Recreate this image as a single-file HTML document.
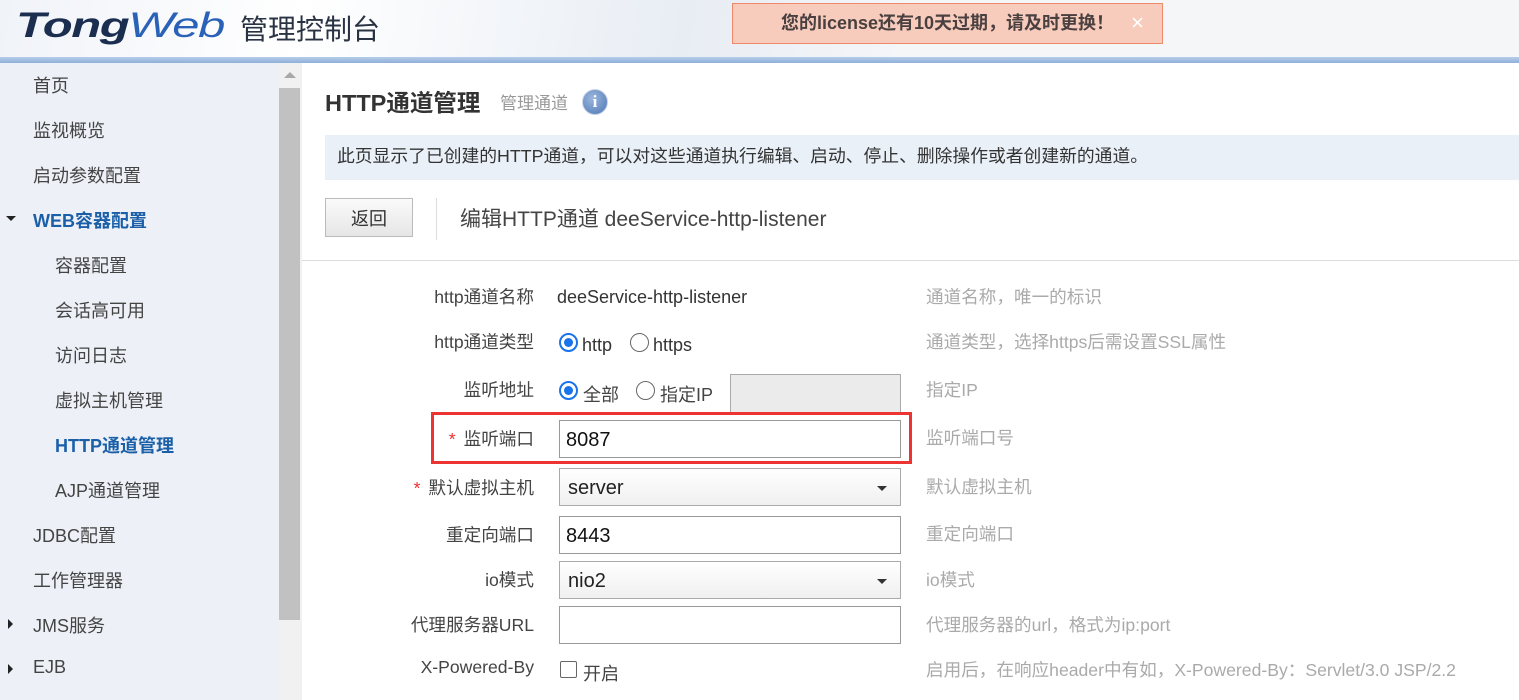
<!DOCTYPE html>
<html><head><meta charset="utf-8">
<style>
*{margin:0;padding:0;box-sizing:border-box}
body{width:1519px;height:700px;overflow:hidden;background:#fff;font-family:"Liberation Sans","Noto Sans CJK SC",sans-serif;position:relative;color:#333}
.hdr{position:absolute;left:0;top:0;width:1519px;height:58px;background:linear-gradient(100deg,#f0f3f8 0%,#fff 20%,#e8edf4 45%,#f5f6f8 60%,#f5f6f8 100%)}
.bar{position:absolute;left:0;top:57px;width:1519px;height:6px;background:linear-gradient(#b6cdea,#8eb0d8)}
.logo{position:absolute;left:16px;top:6px;font-size:35px;font-weight:bold;font-style:italic;color:#1b2e50;letter-spacing:-1px;font-family:"Liberation Sans",sans-serif;transform:scaleX(1.4);transform-origin:left;white-space:nowrap}
.logo span{color:#2a62b8;font-weight:normal}
.logo2{position:absolute;left:240px;top:8px;font-size:28px;color:#2a3344;font-family:"Noto Sans CJK SC",sans-serif;white-space:nowrap}
.lic{position:absolute;left:732px;top:3px;width:431px;height:41px;background:#f8ccbd;border:1px solid #ee8a6c;font-size:18px;font-weight:bold;color:#4a4040;text-align:center;line-height:38px}
.lic i{position:absolute;right:18px;top:0;font-style:normal;color:#fff;font-weight:normal;font-size:22px}
.side{position:absolute;left:0;top:63px;width:279px;height:637px;background:#edf1f7}
.sb{position:absolute;left:279px;top:63px;width:23px;height:637px;background:#f1f1f1}
.thumb{position:absolute;left:279px;top:88px;width:21px;height:532px;background:#c1c1c1}
.arr{position:absolute;left:284px;top:72px;width:0;height:0;border-left:6px solid transparent;border-right:6px solid transparent;border-bottom:6px solid #a8a8a8}
.it{position:absolute;font-size:18px;color:#444;margin-top:-2px}
.tri{position:absolute;left:6px;width:0;height:0}
.title{position:absolute;left:325px;top:84px;font-size:23.5px;font-weight:bold;color:#333}
.sub{position:absolute;left:500px;top:89px;font-size:17px;color:#999}
.info{position:absolute;left:582px;top:89px;width:26px;height:26px;border-radius:50%;background:radial-gradient(circle at 40% 35%,#9bb6de,#4d77b5);border:1px solid #c7d3e6;color:#fff;font:bold 17px "Liberation Serif",serif;text-align:center;line-height:24px}
.desc{position:absolute;left:325px;top:135px;width:1194px;height:45px;background:#e9f0f7;font-size:17.8px;color:#333;line-height:43px;padding-left:12px;white-space:nowrap}
.btn{position:absolute;left:325px;top:198px;width:88px;height:39px;border:1px solid #bbb;background:linear-gradient(#fafafa,#e6e6e6);font-size:18px;text-align:center;line-height:40px;color:#333}
.vl{position:absolute;left:436px;top:198px;width:1px;height:42px;background:#ddd}
.edit{position:absolute;left:460px;top:203px;font-size:21px;color:#444;white-space:nowrap}
.hl{position:absolute;left:302px;top:260px;width:1217px;height:1px;background:#ddd}
.lb{position:absolute;width:234px;left:300px;text-align:right;font-size:17.6px;color:#444;margin-top:-3px;white-space:nowrap}
.st{color:#e33;margin-right:8px}
.val{position:absolute;font-size:18px;color:#333;white-space:nowrap}
.hint{position:absolute;left:926px;font-size:17.6px;color:#aaa;margin-top:-3px;white-space:nowrap}
.inp{position:absolute;left:559px;width:342px;height:38px;border:1px solid #999;background:#fff;font-size:20px;line-height:38px;padding-left:6px;color:#111}
.sel{position:absolute;left:559px;width:342px;height:38px;border:1px solid #aaa;background:linear-gradient(#fff,#f0f0f0);font-size:20px;line-height:38px;padding-left:8px;color:#222}
.sel:after{content:"";position:absolute;right:13px;top:17px;border-left:5px solid transparent;border-right:5px solid transparent;border-top:5px solid #333}
.rad{position:absolute;width:19px;height:19px;border-radius:50%;border:1px solid #666;background:#fff}
.rad.on{border:2px solid #1a73e8}
.rad.on:after{content:"";position:absolute;left:3px;top:3px;width:9px;height:9px;border-radius:50%;background:#1a73e8}
.chk{position:absolute;width:17px;height:17px;border:1px solid #666;border-radius:2px;background:#fff}
</style></head><body>
<div class="hdr"></div><div class="bar"></div>
<div class="logo">Tong<span>Web</span></div>
<div class="logo2">管理控制台</div>
<div class="lic">您的license还有10天过期，请及时更换！<i>×</i></div>
<div class="side"></div><div class="sb"></div><div class="thumb"></div><div class="arr"></div>
<div class="it" style="left:33px;top:74px">首页</div>
<div class="it" style="left:33px;top:119px">监视概览</div>
<div class="it" style="left:33px;top:164px">启动参数配置</div>
<div class="tri" style="top:216px;border-left:5px solid transparent;border-right:5px solid transparent;border-top:5px solid #222"></div>
<div class="it" style="left:33px;top:209px;color:#1a5fa8;font-weight:bold">WEB容器配置</div>
<div class="it" style="left:55px;top:254px">容器配置</div>
<div class="it" style="left:55px;top:299px">会话高可用</div>
<div class="it" style="left:55px;top:344px">访问日志</div>
<div class="it" style="left:55px;top:389px">虚拟主机管理</div>
<div class="it" style="left:55px;top:434px;color:#1a5fa8;font-weight:bold">HTTP通道管理</div>
<div class="it" style="left:55px;top:479px">AJP通道管理</div>
<div class="it" style="left:33px;top:524px">JDBC配置</div>
<div class="it" style="left:33px;top:569px">工作管理器</div>
<div class="tri" style="top:619px;left:8px;border-top:5px solid transparent;border-bottom:5px solid transparent;border-left:5px solid #222"></div>
<div class="it" style="left:33px;top:614px">JMS服务</div>
<div class="tri" style="top:664px;left:8px;border-top:5px solid transparent;border-bottom:5px solid transparent;border-left:5px solid #222"></div>
<div class="it" style="left:33px;top:659px">EJB</div>

<div class="title">HTTP通道管理</div>
<div class="sub">管理通道</div>
<div class="info">i</div>
<div class="desc">此页显示了已创建的HTTP通道，可以对这些通道执行编辑、启动、停止、删除操作或者创建新的通道。</div>
<div class="btn">返回</div><div class="vl"></div>
<div class="edit">编辑HTTP通道 deeService-http-listener</div>
<div class="hl"></div>

<div class="lb" style="top:287px">http通道名称</div>
<div class="val" style="left:557px;top:287px">deeService-http-listener</div>
<div class="hint" style="top:287px">通道名称，唯一的标识</div>

<div class="lb" style="top:332px">http通道类型</div>
<div class="rad on" style="left:559px;top:333px"></div><div class="val" style="left:582px;top:335px">http</div>
<div class="rad" style="left:630px;top:333px"></div><div class="val" style="left:653px;top:335px">https</div>
<div class="hint" style="top:332px">通道类型，选择https后需设置SSL属性</div>

<div class="lb" style="top:380px">监听地址</div>
<div class="rad on" style="left:559px;top:381px"></div><div class="val" style="left:583px;top:381px;color:#444">全部</div>
<div class="rad" style="left:636px;top:381px"></div><div class="val" style="left:660px;top:381px;color:#444">指定IP</div>
<div style="position:absolute;left:730px;top:374px;width:171px;height:40px;background:#ebebeb;border:1px solid #aaa"></div>
<div class="hint" style="top:380px">指定IP</div>

<div style="position:absolute;left:431px;top:412px;width:481px;height:52px;border:3px solid #ee3333"></div>
<div class="lb" style="top:429px"><span class="st">*</span>监听端口</div>
<div class="inp" style="top:420px">8087</div>
<div class="hint" style="top:428px">监听端口号</div>

<div class="lb" style="top:478px"><span class="st">*</span>默认虚拟主机</div>
<div class="sel" style="top:468px">server</div>
<div class="hint" style="top:477px">默认虚拟主机</div>

<div class="lb" style="top:525px">重定向端口</div>
<div class="inp" style="top:516px">8443</div>
<div class="hint" style="top:524px">重定向端口</div>

<div class="lb" style="top:570px">io模式</div>
<div class="sel" style="top:561px">nio2</div>
<div class="hint" style="top:570px">io模式</div>

<div class="lb" style="top:615px">代理服务器URL</div>
<div class="inp" style="top:606px"></div>
<div class="hint" style="top:615px">代理服务器的url，格式为ip:port</div>

<div class="lb" style="top:660px">X-Powered-By</div>
<div class="chk" style="left:560px;top:661px"></div><div class="val" style="left:583px;top:660px;color:#444">开启</div>
<div class="hint" style="top:660px">启用后，在响应header中有如，X-Powered-By：Servlet/3.0 JSP/2.2</div>
</body></html>
